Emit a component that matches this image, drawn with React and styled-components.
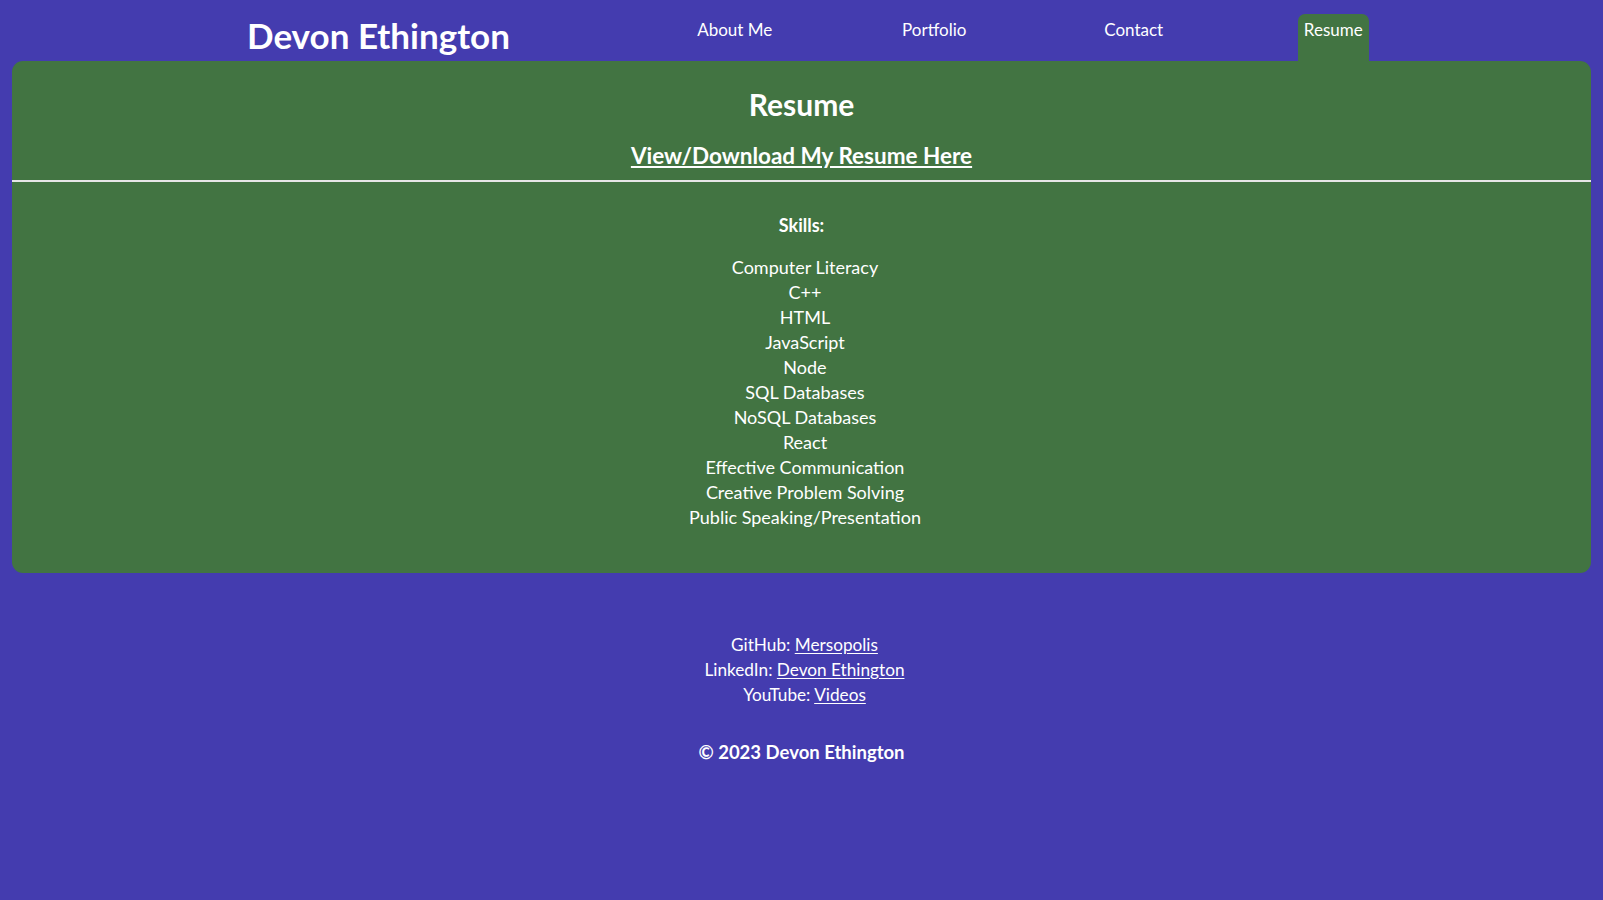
import React from "react";
import styled, { createGlobalStyle } from "styled-components";

const PURPLE = "#443caf";
const GREEN = "#427442";

const Global = createGlobalStyle`
  html, body { margin: 0; padding: 0; background: ${PURPLE}; }
  body { font-family: "Lato", "Liberation Sans", sans-serif; color: #fff; }
  * { box-sizing: border-box; }
`;

const Page = styled.div`
  min-height: 900px;
  background: ${PURPLE};
  padding: 0 12px;
`;

const Header = styled.header`
  display: flex;
  align-items: flex-end;
  height: 61px;
  padding-left: 235px;
`;

const Title = styled.h1`
  margin: 0;
  width: 388px;
  align-self: flex-start;
  padding-top: 14px;
  font-family: "Lato", sans-serif;
  font-weight: 700;
  font-size: 35px;
  line-height: 42px;
  color: #fff;
`;

const Nav = styled.nav`
  display: grid;
  grid-template-columns: repeat(4, 199.5px);
  height: 100%;
`;

const NavItem = styled.a`
  justify-self: center;
  align-self: end;
  height: 47px;
  padding: 6px 6px 0;
  border-radius: 7px 7px 0 0;
  background: ${(p) => (p.$active ? GREEN : "transparent")};
  font-family: "Lato", sans-serif;
  font-size: 17px;
  line-height: 20px;
  color: #fff;
  text-decoration: none;
`;

const Card = styled.main`
  background: ${GREEN};
  border-radius: 11px;
  padding: 26px 0 43px;
  display: flex;
  flex-direction: column;
  align-items: center;
`;

const Heading = styled.h2`
  margin: 0;
  font-size: 30px;
  font-weight: 700;
  line-height: 35px;
`;

const ResumeLink = styled.a`
  margin-top: 20px;
  font-size: 22.5px;
  font-weight: 700;
  line-height: 28px;
  color: #fff;
  text-decoration: underline;
  text-underline-offset: 2px;
`;

const Divider = styled.hr`
  align-self: stretch;
  margin: 10px 0 0;
  border: 0;
  height: 2px;
  background: #e6e6e6;
`;

const SubHeading = styled.h3`
  margin: 32px 0 0;
  font-size: 18px;
  font-weight: 700;
  line-height: 22px;
`;

const SkillList = styled.ul`
  margin: 19px 0 0;
  padding: 0 0 0 7px;
  list-style: none;
  text-align: center;
`;

const Skill = styled.li`
  font-family: "Lato", sans-serif;
  font-size: 18px;
  line-height: 25px;
`;

const Footer = styled.footer`
  margin-top: 59px;
  display: flex;
  flex-direction: column;
  align-items: center;
`;

const SocialRow = styled.p`
  margin: 0;
  padding-left: 6px;
  font-size: 17.2px;
  line-height: 25px;
`;

const SocialLink = styled.a`
  color: #fff;
  text-decoration: underline;
  text-underline-offset: 2px;
`;

const Copyright = styled.p`
  margin: 34px 0 0;
  font-size: 18.5px;
  font-weight: 700;
  line-height: 22px;
`;

const skills = [
  "Computer Literacy",
  "C++",
  "HTML",
  "JavaScript",
  "Node",
  "SQL Databases",
  "NoSQL Databases",
  "React",
  "Effective Communication",
  "Creative Problem Solving",
  "Public Speaking/Presentation",
];

const socials = [
  ["GitHub", "Mersopolis"],
  ["LinkedIn", "Devon Ethington"],
  ["YouTube", "Videos"],
];

const navItems = ["About Me", "Portfolio", "Contact", "Resume"];

export default function App() {
  return (
    <Page>
      <Global />
      <Header>
        <Title>Devon Ethington</Title>
        <Nav>
          {navItems.map((n) => (
            <NavItem key={n} href="#" $active={n === "Resume"}>
              {n}
            </NavItem>
          ))}
        </Nav>
      </Header>
      <Card>
        <Heading>Resume</Heading>
        <ResumeLink href="#">View/Download My Resume Here</ResumeLink>
        <Divider />
        <SubHeading>Skills:</SubHeading>
        <SkillList>
          {skills.map((s) => (
            <Skill key={s}>{s}</Skill>
          ))}
        </SkillList>
      </Card>
      <Footer>
        {socials.map(([label, link]) => (
          <SocialRow key={label}>
            {label}: <SocialLink href="#">{link}</SocialLink>
          </SocialRow>
        ))}
        <Copyright>© 2023 Devon Ethington</Copyright>
      </Footer>
    </Page>
  );
}
